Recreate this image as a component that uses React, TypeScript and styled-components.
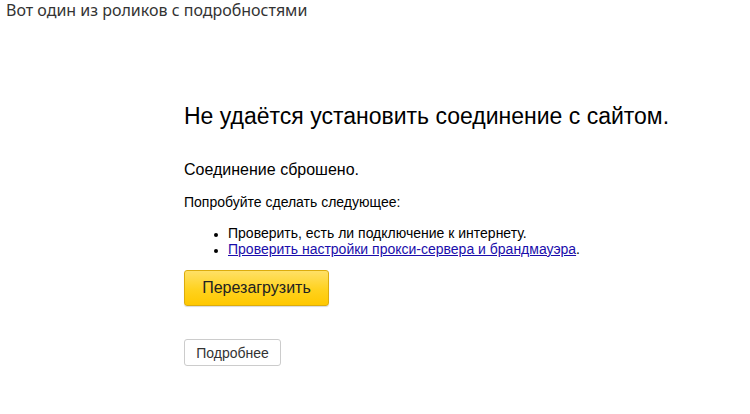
import React from 'react';
import styled, {createGlobalStyle} from 'styled-components';

const GlobalStyle = createGlobalStyle`
    html, body {
        margin: 0;
        padding: 0;
        background: #fff;
    }
`;

const Page = styled.div`
    width: 750px;
    height: 414px;
    overflow: hidden;
    display: flex;
    flex-direction: column;
`;

const Caption = styled.div`
    font-family: "Noto Sans", sans-serif;
    font-size: 16px;
    line-height: 22px;
    color: #333;
    padding: 0 0 0 6px;
    margin-top: -1px;
`;

const ErrorBlock = styled.div`
    display: flex;
    flex-direction: column;
    align-items: flex-start;
    padding: 81px 0 0 184px;
    font-family: "Liberation Sans", Arial, sans-serif;
    color: #000;
`;

const Title = styled.h1`
    font-size: 23px;
    font-weight: normal;
    line-height: 28px;
    margin: 0 0 30px;
`;

const Reason = styled.p`
    font-size: 16px;
    line-height: 20px;
    margin: 0 0 14px;
`;

const Hint = styled.p`
    font-size: 14px;
    line-height: 16px;
    margin: 0 0 15px;
`;

const Tips = styled.ul`
    font-size: 14px;
    line-height: 16px;
    margin: 0 0 13px;
    padding-left: 44px;
    li::marker {
        font-size: 12px;
    }
    a {
        color: #1a0dab;
    }
`;

const ReloadButton = styled.button`
    font-family: "Liberation Sans", Arial, sans-serif;
    font-size: 16px;
    color: #222;
    width: 145px;
    height: 36px;
    border: 1px solid #dcac0c;
    border-radius: 3px;
    background: linear-gradient(to bottom, #ffe066 0%, #ffd21e 55%, #ffc800 100%);
    box-shadow: 0 1px 1px rgba(0, 0, 0, 0.15);
    cursor: pointer;
    margin-bottom: 33px;
`;

const DetailsButton = styled.button`
    font-family: "Liberation Sans", Arial, sans-serif;
    font-size: 14px;
    color: #333;
    width: 97px;
    height: 27px;
    border: 1px solid #ccc;
    border-radius: 3px;
    background: #fff;
    cursor: pointer;
`;

const App = () => {
    return (
        <Page>
            <GlobalStyle />
            <Caption>Вот один из роликов с подробностями</Caption>
            <ErrorBlock>
                <Title>Не удаётся установить соединение с сайтом.</Title>
                <Reason>Соединение сброшено.</Reason>
                <Hint>Попробуйте сделать следующее:</Hint>
                <Tips>
                    <li>Проверить, есть ли подключение к интернету.</li>
                    <li><a href="#">Проверить настройки прокси-сервера и брандмауэра</a>.</li>
                </Tips>
                <ReloadButton>Перезагрузить</ReloadButton>
                <DetailsButton>Подробнее</DetailsButton>
            </ErrorBlock>
        </Page>
    );
}

export default App;
